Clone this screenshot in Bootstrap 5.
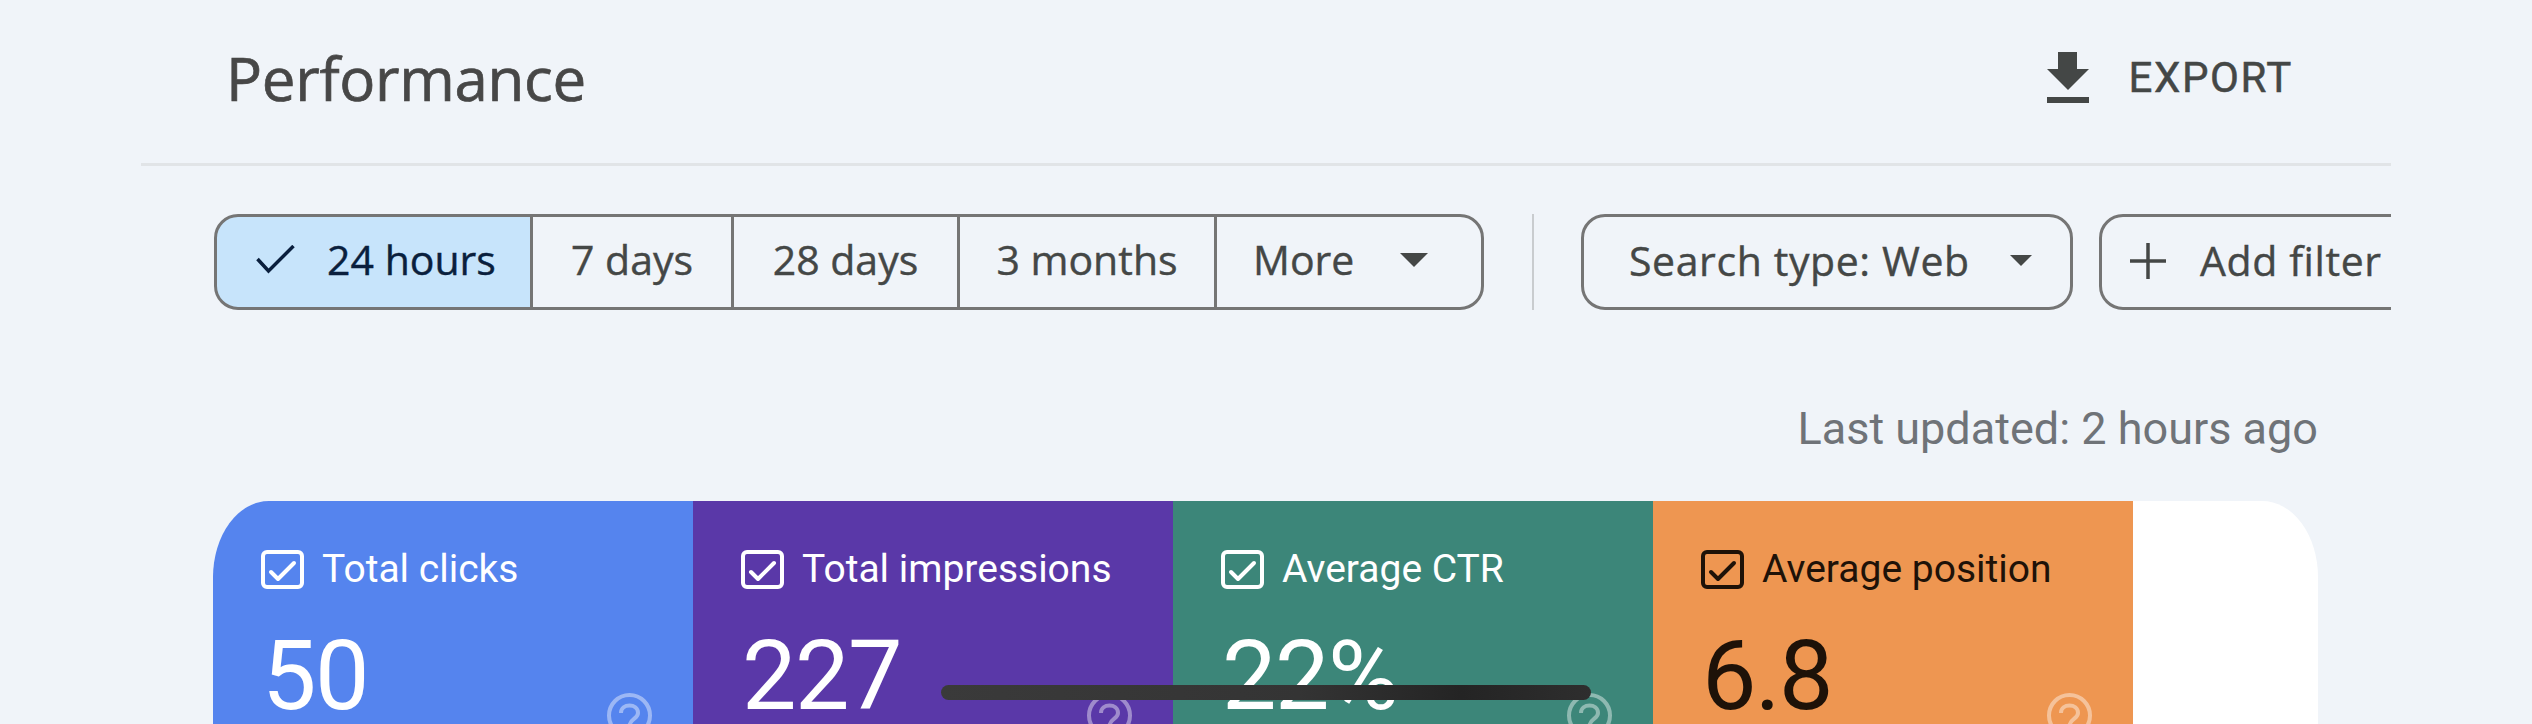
<!DOCTYPE html>
<html lang="en">
<head>
  <meta charset="UTF-8">
  <title>Performance</title>
  <link href="https://cdn.jsdelivr.net/npm/bootstrap@5.3.0/dist/css/bootstrap.min.css" rel="stylesheet">
  <style>
    html, body { height: 724px; overflow: hidden; }
    body { background: #f0f4f9; font-family: "Open Sans", "Liberation Sans", sans-serif; color: #444746; }
    .perf-wrap { width: 2250px; margin-left: 141px; }
    .perf-head { height: 166px; border-bottom: 3px solid #e1e4e7; padding: 0 98px 0 85px; }
    .perf-title { font-size: 60px; font-weight: 400; margin: 0; color: #474747; padding-bottom: 7px; letter-spacing: -.3px; -webkit-text-stroke: .7px #474747; }
    .export-btn { font-family: Roboto, sans-serif; font-size: 42px; font-weight: 400; letter-spacing: 1.6px; gap: 40px; color: #444746; padding: 0 0 8px; border: 0; -webkit-text-stroke: .5px #444746; }
    .filter-row { margin-top: 48px; padding-left: 73px; overflow: hidden; height: 96px; }
    .seg-group { flex: none; }
    .seg-btn, .seg-btn:hover { height: 96px; font-size: 41px; line-height: 1; color: #444746; background: transparent; border: 3px solid #757575; padding: 0 0 5px; -webkit-text-stroke: .4px; }
    .seg-group.btn-group > .seg-btn { border-radius: 0; flex: none; }
    .seg-group.btn-group > .seg-btn:not(:first-child) { margin-left: -3px; }
    .seg-group.btn-group > .seg-btn:first-child { border-radius: 24px 0 0 24px; }
    .seg-group.btn-group > .seg-btn:last-child { border-radius: 0 24px 24px 0; }
    .seg-on, .seg-on:hover { background: #c7e4fb; color: #0a1f3d; width: 319px; gap: 32px; padding-left: 4px; }
    .seg-7 { width: 204px; }
    .seg-28 { width: 229px; }
    .seg-3m { width: 260px; }
    .seg-more { width: 270px; gap: 46px; padding-left: 36px; }
    .v-rule { width: 2px; height: 96px; background: #c9cccf; margin: 0 47px 0 48px; flex: none; }
    .chip-btn, .chip-btn:hover { flex: none; height: 96px; font-size: 41px; line-height: 1; color: #444746; border: 3px solid #757575; border-radius: 24px; background: transparent; padding: 0 0 3px; letter-spacing: .6px; -webkit-text-stroke: .4px; }
    .chip-type { width: 492px; gap: 40px; padding-left: 45px; }
    .chip-add { width: 320px; margin-left: 26px; padding-left: 28px; gap: 34px; }
    .updated-line { margin: 94px 73px 0 0; text-align: right; font-family: Roboto, sans-serif; font-size: 45px; line-height: 50px; color: #6f7378; }
    .tile-row { margin: 47px 0 0 72px; width: 2105px; height: 400px; background: #fff; border-radius: 56px 56px 0 0 / 76px 76px 0 0; overflow: hidden; font-family: Roboto, sans-serif; }
    .tile-cell { width: 480px; padding: 48px 41px 0 48px; color: #fff; }
    .tile-blue { background: #5584ee; }
    .tile-purple { background: #5a38a8; }
    .tile-teal { background: #3c8679; }
    .tile-orange { background: #ee9651; color: #1e1208; }
    .tile-label { font-size: 39px; line-height: 40px; gap: 18px; white-space: nowrap; }
    .tile-value { font-size: 97px; line-height: 90px; margin-top: 42px; padding-left: 1px; letter-spacing: -1.5px; }
    .tile-help { margin-top: 104px; opacity: .42; color: #fff; flex: none; }
    .home-bar { position: absolute; left: 941px; top: 685px; width: 650px; height: 15px; border-radius: 8px; background: linear-gradient(90deg, #3a3a3a, #343434 55%, #242424 80%, #2e2e2e); }
  </style>
</head>
<body>
  <div class="perf-wrap">
    <div class="perf-head d-flex align-items-center justify-content-between">
      <h1 class="perf-title">Performance</h1>
      <button type="button" class="btn export-btn d-flex align-items-center">
        <svg width="42" height="51" viewBox="0 0 42 51"><path d="M11 0h19v17h12L21 38 0 17h11zM0 45h42v6H0z" fill="#444746"/></svg>
        EXPORT
      </button>
    </div>

    <div class="filter-row d-flex">
      <div class="btn-group seg-group" role="group">
        <button type="button" class="btn seg-btn seg-on d-flex align-items-center justify-content-center">
          <svg width="40" height="30" viewBox="0 0 40 30"><path d="M2.500 14l11 12L38.500 1" fill="none" stroke="#0a1f3d" stroke-width="3.500"/></svg>
          24 hours
        </button>
        <button type="button" class="btn seg-btn seg-7">7 days</button>
        <button type="button" class="btn seg-btn seg-28">28 days</button>
        <button type="button" class="btn seg-btn seg-3m">3 months</button>
        <button type="button" class="btn seg-btn seg-more d-flex align-items-center">
          More
          <svg width="28" height="14" viewBox="0 0 28 14"><path d="M0 0h28L14 14z" fill="#444746"/></svg>
        </button>
      </div>
      <div class="v-rule"></div>
      <button type="button" class="btn chip-btn chip-type d-flex align-items-center">
        Search type: Web
        <svg width="22" height="11" viewBox="0 0 22 11"><path d="M0 0h22L11 11z" fill="#444746"/></svg>
      </button>
      <button type="button" class="btn chip-btn chip-add d-flex align-items-center">
        <svg width="36" height="36" viewBox="0 0 36 36"><path d="M18 0v36M0 18h36" stroke="#444746" stroke-width="3.500"/></svg>
        Add filter
      </button>
    </div>

    <p class="updated-line">Last updated: 2 hours ago</p>

    <div class="tile-row d-flex">
      <div class="tile-cell tile-blue">
        <div class="tile-label d-flex align-items-center">
          <svg width="43" height="39" viewBox="0 0 43 39"><rect x="2" y="2" width="39" height="35" rx="4" fill="none" stroke="currentColor" stroke-width="4"/><path d="M10 22l7 7 16-16" fill="none" stroke="currentColor" stroke-width="4" stroke-linecap="round" stroke-linejoin="round"/></svg>
          Total clicks
        </div>
        <div class="d-flex justify-content-between">
          <div class="tile-value">50</div>
          <svg class="tile-help" width="45" height="45" viewBox="0 0 45 45"><circle cx="22.500" cy="22.500" r="20.500" fill="none" stroke="currentColor" stroke-width="4"/><path d="M14 20c0-10 17-10 17 0 0 6-8.500 6-8.500 13M22.500 35v4" fill="none" stroke="currentColor" stroke-width="4"/></svg>
        </div>
      </div>
      <div class="tile-cell tile-purple">
        <div class="tile-label d-flex align-items-center">
          <svg width="43" height="39" viewBox="0 0 43 39"><rect x="2" y="2" width="39" height="35" rx="4" fill="none" stroke="currentColor" stroke-width="4"/><path d="M10 22l7 7 16-16" fill="none" stroke="currentColor" stroke-width="4" stroke-linecap="round" stroke-linejoin="round"/></svg>
          Total impressions
        </div>
        <div class="d-flex justify-content-between">
          <div class="tile-value">227</div>
          <svg class="tile-help" width="45" height="45" viewBox="0 0 45 45"><circle cx="22.500" cy="22.500" r="20.500" fill="none" stroke="currentColor" stroke-width="4"/><path d="M14 20c0-10 17-10 17 0 0 6-8.500 6-8.500 13M22.500 35v4" fill="none" stroke="currentColor" stroke-width="4"/></svg>
        </div>
      </div>
      <div class="tile-cell tile-teal">
        <div class="tile-label d-flex align-items-center">
          <svg width="43" height="39" viewBox="0 0 43 39"><rect x="2" y="2" width="39" height="35" rx="4" fill="none" stroke="currentColor" stroke-width="4"/><path d="M10 22l7 7 16-16" fill="none" stroke="currentColor" stroke-width="4" stroke-linecap="round" stroke-linejoin="round"/></svg>
          Average CTR
        </div>
        <div class="d-flex justify-content-between">
          <div class="tile-value">22%</div>
          <svg class="tile-help" width="45" height="45" viewBox="0 0 45 45"><circle cx="22.500" cy="22.500" r="20.500" fill="none" stroke="currentColor" stroke-width="4"/><path d="M14 20c0-10 17-10 17 0 0 6-8.500 6-8.500 13M22.500 35v4" fill="none" stroke="currentColor" stroke-width="4"/></svg>
        </div>
      </div>
      <div class="tile-cell tile-orange">
        <div class="tile-label d-flex align-items-center">
          <svg width="43" height="39" viewBox="0 0 43 39"><rect x="2" y="2" width="39" height="35" rx="4" fill="none" stroke="currentColor" stroke-width="4"/><path d="M10 22l7 7 16-16" fill="none" stroke="currentColor" stroke-width="4" stroke-linecap="round" stroke-linejoin="round"/></svg>
          Average position
        </div>
        <div class="d-flex justify-content-between">
          <div class="tile-value">6.8</div>
          <svg class="tile-help" width="45" height="45" viewBox="0 0 45 45"><circle cx="22.500" cy="22.500" r="20.500" fill="none" stroke="currentColor" stroke-width="4"/><path d="M14 20c0-10 17-10 17 0 0 6-8.500 6-8.500 13M22.500 35v4" fill="none" stroke="currentColor" stroke-width="4"/></svg>
        </div>
      </div>
    </div>
  </div>
  <div class="home-bar"></div>
  <script src="https://cdn.jsdelivr.net/npm/bootstrap@5.3.0/dist/js/bootstrap.bundle.min.js"></script>
</body>
</html>
